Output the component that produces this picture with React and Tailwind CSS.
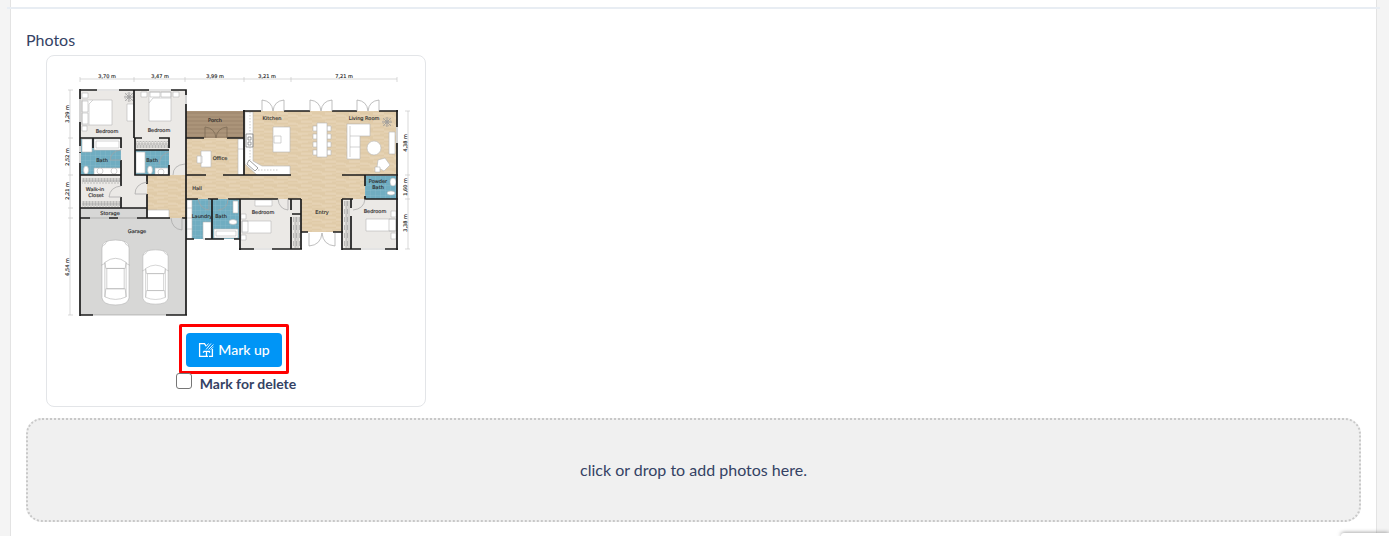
const topDims = [
  { x: 107, text: '3,70 m' },
  { x: 160, text: '3,47 m' },
  { x: 215, text: '3,99 m' },
  { x: 267, text: '3,21 m' },
  { x: 344, text: '7,21 m' },
];

const sideDims = [
  { x: 69, y: 114, text: '3,29 m' },
  { x: 69, y: 157, text: '2,52 m' },
  { x: 69, y: 191, text: '2,21 m' },
  { x: 69, y: 267, text: '6,54 m' },
  { x: 407, y: 143, text: '4,38 m' },
  { x: 407, y: 187, text: '1,60 m' },
  { x: 407, y: 223, text: '3,38 m' },
];

const roomNames = [
  { x: 107, y: 133, text: 'Bedroom' },
  { x: 159, y: 132, text: 'Bedroom' },
  { x: 215, y: 122, text: 'Porch' },
  { x: 272, y: 120, text: 'Kitchen' },
  { x: 364, y: 120, text: 'Living Room' },
  { x: 102, y: 162, text: 'Bath' },
  { x: 152, y: 162, text: 'Bath' },
  { x: 220, y: 160, text: 'Office' },
  { x: 95, y: 191, text: 'Walk-in' },
  { x: 96, y: 197, text: 'Closet' },
  { x: 197, y: 190, text: 'Hall' },
  { x: 110, y: 215, text: 'Storage' },
  { x: 137, y: 233, text: 'Garage' },
  { x: 202, y: 218, text: 'Laundry' },
  { x: 221, y: 218, text: 'Bath' },
  { x: 263, y: 214, text: 'Bedroom' },
  { x: 322, y: 214, text: 'Entry' },
  { x: 378, y: 183, text: 'Powder' },
  { x: 378, y: 189, text: 'Bath' },
  { x: 375, y: 213, text: 'Bedroom' },
];

function Car({ x, y, w, h }) {
  return (
    <svg x={x} y={y} width={w} height={h} viewBox="0 0 30 66" preserveAspectRatio="none" fill="#fff" stroke="#b0b0b0" strokeWidth="0.6">
      <path d="M1 9Q1 1 15 1Q29 1 29 9V58Q28 65 15 65Q2 65 1 58Z" />
      <path d="M1 7Q5 6 6 2M29 7Q25 6 24 2" />
      <path d="M4 23Q15 15 26 23L25 29H5ZM6 29H24V49H6ZM5 49H25L26 57Q15 62 4 57Z" />
      <path d="M4 23V57M26 23V57M0 26L4 24M30 26L26 24" />
    </svg>
  );
}

function FloorPlan() {
  return (
    <svg viewBox="61 63 350 261" className="block w-full" role="img" aria-label="Floor plan">
      <defs>
        <pattern id="wood" width="24" height="8" patternUnits="userSpaceOnUse">
          <rect width="24" height="8" fill="#e3cfae" />
          <path d="M0 1H13M8 3H24M0 5H9M14 7H24" stroke="#dcc5a0" strokeWidth="0.8" />
          <path d="M13 2H24M0 4H10M10 6H20" stroke="#e9d8bc" strokeWidth="0.9" />
        </pattern>
        <pattern id="deck" width="58" height="4" patternUnits="userSpaceOnUse">
          <rect width="58" height="4" fill="#ab9479" />
          <path d="M0 1H58" stroke="#947d63" strokeWidth="0.7" />
        </pattern>
        <pattern id="tile" width="5" height="5" patternUnits="userSpaceOnUse">
          <rect width="5" height="5" fill="#70adc1" />
          <path d="M0 0H5M0 0V5" stroke="#8bbfce" strokeWidth="0.6" />
        </pattern>
        <pattern id="hangers" width="3" height="8" patternUnits="userSpaceOnUse">
          <path d="M1 0V8M2.5 1V6" stroke="#9b9b9b" strokeWidth="0.6" />
        </pattern>
      </defs>

      {/* floors */}
      <path d="M80 90H186V208H80Z" fill="#ebe9e6" />
      <path d="M80 208H147V218H186V315H80Z" fill="#d7d7d6" />
      <path d="M240 199H301V249H240ZM343 199H397V249H343Z" fill="#ebe9e6" />
      <path d="M147 175H186V138H244V111H397V175H365V199H343V232H301V199H186V218H147Z" fill="url(#wood)" />
      <path d="M186 111H244V138H186Z" fill="url(#deck)" />
      <path d="M81 139H121V175H81ZM135 150H169V175H135ZM186 199H239V239H186ZM365 176H397V199H365Z" fill="url(#tile)" />

      {/* closets */}
      <path d="M136 141H168V148H136ZM82 178H120V184H82ZM82 201H120V207H82ZM293 217H300V248H293ZM344 201H350V248H344Z" fill="url(#hangers)" />
      <path d="M136 144H168M82 181H120M82 204H120M296 217V248M347 201V248" stroke="#999" strokeWidth="0.5" />

      {/* furniture */}
      <g fill="#fff" stroke="#b5b5b5" strokeWidth="0.6">
        <path d="M82 100H112V125H82ZM82 101H88V112H82ZM82 113H88V124H82ZM82 93H88V98H82ZM82 126H87V131H82ZM127 104H134V121H127Z" />
        <path d="M89 125V104L93 100" />
        <path d="M149 92H171V121H149ZM150 92H160V97H150ZM161 92H171V97H161ZM141 92H147V97H141ZM173 92H179V97H173ZM149 103L153 98H171" />
        <path d="M82 139H92V152H82ZM94 139H121V150H94ZM96 141H119V148H96ZM136 152H145V173H136ZM94 168H121V175H94ZM155 168H168V175H155Z" />
        <path d="M201 151H211V167H201ZM197 156H202V163H197ZM238 139H244V175H238ZM238 149H244M147 210H169V218H147Z" />
        <path d="M245 112H253V161L262 166H290V175H257L245 164Z" />
        <path d="M273 127H290V152H273ZM274 136H281V143H274Z" />
        <path d="M347 124H370V136H360V159H347ZM350 126V157M350 136H360M350 147H360" />
        <path d="M389 132H395V154H389ZM378 160L385 158L390 165L384 171L377 167Z" />
        <path d="M375 167H380V172H375ZM187 200H192V239H187ZM187 208H192M187 218H192M187 229H192M203 222H211V239H203ZM214 229H238V238H214ZM216 231H236V236H216ZM233 201H238V213H233Z" />
        <path d="M242 221H271V233H242ZM242 221H248V232H242ZM255 200H272V206H255ZM241 214H246V219H241ZM241 235H246V240H241Z" />
        <path d="M366 219H396V231H366ZM389 219H396V231H389ZM391 211H396V217H391ZM391 233H396V239H391Z" />
        <circle cx="374" cy="148" r="7" />
        <ellipse cx="86" cy="170" rx="2.5" ry="4" />
        <ellipse cx="150" cy="170" rx="2.5" ry="4" />
        <ellipse cx="233" cy="222" rx="4" ry="2.5" />
        <ellipse cx="391" cy="193" rx="4" ry="2" />
        <ellipse cx="393" cy="182" rx="3" ry="4" />
        <circle cx="100" cy="171" r="3" />
        <circle cx="114" cy="171" r="3" />
        <circle cx="161" cy="172" r="3" />
        <path d="M313 126H317V131H313ZM313 134H317V139H313ZM313 142H317V147H313ZM313 150H317V155H313ZM327 126H331V131H327ZM327 134H331V139H327ZM327 142H331V147H327ZM327 150H331V155H327Z" />
        <path d="M317 123H327V157H317Z" />
      </g>
      <path d="M246 134H253V147H246ZM248 137H251V140H248ZM248 142H251V145H248ZM249 160L258 168L255 171L247 164Z" fill="none" stroke="#777" strokeWidth="0.7" />
      <path d="M250 112V134M250 147V160M258 170H278" stroke="#aaa" strokeWidth="0.6" strokeDasharray="1.5 1.5" />

      {/* plants */}
      <g stroke="#9a9a9a" strokeWidth="0.7" fill="none">
        <path d="M124 97H134M129 92V102M125 93L133 101M133 93L125 101" />
        <circle cx="129" cy="97" r="4" strokeDasharray="1 1" />
        <circle cx="129" cy="97" r="2" />
        <path d="M382 122H392M387 117V127M383 118L391 126M391 118L383 126" />
        <circle cx="387" cy="122" r="4" strokeDasharray="1 1" />
        <circle cx="387" cy="122" r="2" />
      </g>

      {/* garage */}
      <Car x={101} y={239} w={29} h={67} />
      <Car x={142} y={249} w={27} h={56} />

      {/* walls */}
      <g fill="none" stroke="#1c1c1c" strokeWidth="1.7">
        <path d="M80 90H186V199M80 89V316M186 199V315M80 315H93M166 315H187" />
        <path d="M134 90V138M80 138H121V148M121 160V175M80 175H121V186M121 197V208M93 138V148" />
        <path d="M134 138H142M159 138H169V148M135 138V175H169V165M135 150H169" />
        <path d="M147 175V184M147 194V218M80 208H147M80 218H90M109 218H118M137 218H170M182 218H187" />
        <path d="M186 138H204M227 138H244M244 110V175M243 111H261M284 111H310M332 111H357M379 111H398" />
        <path d="M186 175H206M223 175H291M342 175H398M397 110V175" />
        <path d="M186 199H198M208 199H218M228 199H278M288 199H301M186 239H194M205 239H224M234 239H240M212 199V239M240 199V250M239 249H302M291 199V210M291 217V249M301 199V215M301 213V249M292 214H301" />
        <path d="M301 232H308M333 232H343M342 199V250M342 199H353M365 175V186M365 196V199H398M397 175V250M342 249H398M351 199V208M351 216V249" />
      </g>
      <path d="M97 90H119M149 90H171M186 95V104M80 99V122M80 153V163M397 127V143M80 146V152M254 249H272M361 249H385" stroke="#e4e4e4" strokeWidth="1.8" />
      <path d="M90 218H109M118 218H137M93 315H166" stroke="#999" strokeWidth="0.6" />

      {/* doors */}
      <g fill="none" stroke="#a3a3a3" strokeWidth="0.7">
        <path d="M262 111V100Q272 101 273 111Q274 101 284 100V111" />
        <path d="M310 111V100Q320 101 321 111Q322 101 332 100V111" />
        <path d="M357 111V100Q367 101 368 111Q369 101 379 100V111" />
        <path d="M309 233V246Q321 245 322 233Q323 245 335 246V233" />
        <path d="M205 138V127Q215 128 216 138Q217 128 227 127V138" stroke="#766550" />
        <path d="M121 186Q110 187 109 197H121M147 182Q135 184 135 194H147M185 164Q173 165 173 175M171 218Q172 229 182 230V218" />
        <path d="M121 150Q111 151 110 160H121M169 152Q160 154 159 164M198 199Q200 209 209 210V199M218 210Q228 209 228 199M278 199Q279 209 288 210V199M353 210Q364 209 365 199" />
      </g>

      {/* dimension lines */}
      <g stroke="#c9c9c9" strokeWidth="0.7">
        <path d="M80 79H397M80 77V82M134 77V82M185 77V82M244 77V82M291 77V82M397 77V82" />
        <path d="M70 90V315M68 90H73M68 138H73M68 175H73M68 208H73M68 218H73M68 315H73" />
        <path d="M408 111V249M405 111H410M405 175H410M405 199H410M405 249H410" />
      </g>

      <g
        fill="#2b2b2b"
        stroke="#2b2b2b"
        strokeWidth="0.15"
        fontFamily="'DejaVu Sans', sans-serif"
        fontSize="5"
        textAnchor="middle"
      >
        {topDims.map((d) => (
          <text key={d.text} x={d.x} y={78}>{d.text}</text>
        ))}
        {sideDims.map((d) => (
          <text key={d.text} transform={`translate(${d.x} ${d.y}) rotate(-90)`}>{d.text}</text>
        ))}
        {roomNames.map((r) => (
          <text key={`${r.x}-${r.y}`} x={r.x} y={r.y}>{r.text}</text>
        ))}
      </g>
    </svg>
  );
}

function MarkupIcon() {
  return (
    <svg viewBox="0 0 16 16" className="size-4" fill="none" stroke="currentColor" strokeWidth="1.3" aria-hidden="true">
      <path d="M7 14.4H1.6V1.6H6.5L8 4M11 14.4H14.4V7" />
      <path d="M5.5 9.4H11.5V10.8M5.5 9.4V10.8M8.5 9.4V14.4M7 14.4H10" />
      <path d="M8 7.5L13 1.5M10.5 7.5L15.4 2.5M8 4.5L10.5 1.5M12.5 7.5L15.4 5" strokeWidth="0.9" />
    </svg>
  );
}

function PhotoCard() {
  return (
    <div className="ml-5 mt-[3px] w-[380px] max-w-full rounded-lg border border-[#e3e5e8] px-3.5 pb-3 pt-[7px] flex flex-col items-center">
      <FloorPlan />
      <div className="mr-1 rounded-xs border-3 border-[#ff0000] px-1 pb-1 pt-1.5">
        <button
          type="button"
          className="flex h-[34px] items-center gap-1 rounded-[4px] bg-[#0095f6] px-3 text-sm font-medium text-white"
        >
          <MarkupIcon />
          Mark up
        </button>
      </div>
      <label className="flex items-start gap-2 text-sm font-bold">
        <input
          type="checkbox"
          className="-mt-px size-4 appearance-none rounded-[3px] border border-[#767676] bg-white checked:bg-[#0095f6]"
        />
        Mark for delete
      </label>
    </div>
  );
}

export default function App() {
  return (
    <div className="relative min-h-screen overflow-hidden bg-[#f4f4f4] pl-2.5 pr-3 font-['Lato',sans-serif] text-base text-[#344264]">
      <main className="min-h-screen border-x border-[#e3e3e3] bg-white pt-[7px]">
        <hr className="-mx-1 border-t-2 border-[#e8edf3]" />
        <section className="px-[15px] pb-3.5 pt-[19px]">
          <h2>Photos</h2>
          <PhotoCard />
          <label className="mt-[11px] flex h-[104px] cursor-pointer items-center justify-center rounded-2xl border-2 border-dotted border-[#c8c8c8] bg-[#f0f0f0]">
            click or drop to add photos here.
            <input type="file" accept="image/*" multiple className="sr-only" />
          </label>
        </section>
      </main>
      <div className="absolute bottom-0 right-0 h-[3px] w-12 rounded-tl-sm bg-white shadow-[0_0_4px_#777]"></div>
    </div>
  );
}
